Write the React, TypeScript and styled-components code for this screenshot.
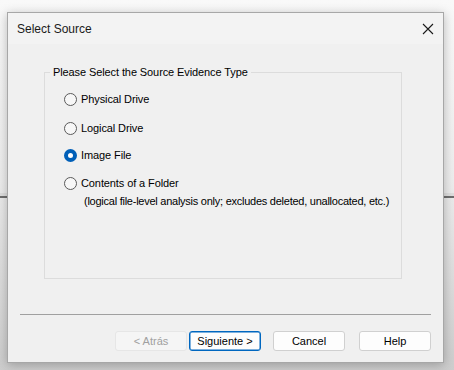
import React from "react";
import styled, { createGlobalStyle } from "styled-components";

const GlobalStyle = createGlobalStyle`
    html, body {
        margin: 0;
        padding: 0;
    }
    body {
        width: 454px;
        height: 370px;
        overflow: hidden;
        font-family: "Liberation Sans", Arial, sans-serif;
        background:
            linear-gradient(
                to bottom,
                transparent 0,
                transparent 193px,
                #dedede 193px,
                #dedede 196px,
                #6e6e6e 196px,
                #6e6e6e 198px,
                transparent 198px
            ),
            linear-gradient(to bottom, #f9f9f9 0, #ededed 180px, #cdcdcd 370px);
    }
`;

const Dialog = styled.div`
    margin: 12px 0 0 7px;
    width: 435px;
    height: 349px;
    border: 1px solid #a7a7a7;
    background: #f0f0f0;
    box-shadow: 0 2px 10px rgba(0, 0, 0, 0.25);
    display: flex;
    flex-direction: column;
`;

const TitleBar = styled.div`
    height: 31px;
    display: flex;
    align-items: center;
    justify-content: space-between;
    padding: 0 6px 0 9px;
    background: #f3f3f3;
    font-size: 12px;
    color: #1a1a1a;
`;

const CloseButton = styled.div`
    width: 18px;
    height: 18px;
    display: flex;
    align-items: center;
    justify-content: center;
`;

const Content = styled.div`
    flex: 1;
    display: flex;
    flex-direction: column;
    padding: 22px 12px 11px 12px;
`;

const Group = styled.fieldset`
    margin: 0 0 0 24px;
    width: 356px;
    height: 211px;
    padding: 0;
    border: 1px solid #dcdcdc;
    border-radius: 0;
    box-sizing: content-box;
    display: flex;
    flex-direction: column;
    legend {
        margin-left: 5px;
        padding: 0 3px;
        font-size: 11px;
        letter-spacing: -0.1px;
        color: #000;
    }
`;

const Options = styled.div`
    display: flex;
    flex-direction: column;
    padding: 15px 0 0 19px;
`;

const Option = styled.label<{ $gap: number }>`
    display: flex;
    align-items: center;
    gap: 4px;
    margin-bottom: ${(p) => p.$gap}px;
    font-size: 11px;
    letter-spacing: -0.1px;
    color: #000;
    line-height: 13px;
`;

const Radio = styled.span<{ $checked?: boolean }>`
    width: 13px;
    height: 13px;
    box-sizing: border-box;
    border-radius: 50%;
    flex-shrink: 0;
    border: ${(p) => (p.$checked ? "4px solid #005fb8" : "1px solid #5a5a5a")};
    background: ${(p) => (p.$checked ? "#ffffff" : "#f7f7f7")};
`;

const Note = styled.div`
    margin: 5px 0 0 20px;
    font-size: 11px;
    line-height: 13px;
    letter-spacing: -0.25px;
    white-space: nowrap;
    color: #000;
`;

const Separator = styled.div`
    margin-top: auto;
    height: 1px;
    background: #a0a0a0;
`;

const ButtonRow = styled.div`
    display: flex;
    justify-content: flex-end;
    margin-top: 16px;
`;

const Button = styled.button<{ $primary?: boolean; $space?: number }>`
    width: 72px;
    height: 20px;
    margin-left: ${(p) => p.$space ?? 0}px;
    padding: 0;
    box-sizing: border-box;
    border-radius: 3px;
    font-family: "Liberation Sans", Arial, sans-serif;
    font-size: 11px;
    color: #000;
    background: #fdfdfd;
    border: 1px solid ${(p) => (p.$primary ? "#0067c0" : "#d0d0d0")};
    box-shadow: ${(p) => (p.$primary ? "inset 0 0 0 0.5px #0067c0" : "none")};
    &:disabled {
        color: #a0a0a0;
        background: #f5f5f5;
        border-color: #e6e6e6;
    }
`;

const options = [
    { label: "Physical Drive", gap: 16 },
    { label: "Logical Drive", gap: 14 },
    { label: "Image File", gap: 15, checked: true },
    { label: "Contents of a Folder", gap: 0 },
];

const App = () => {
    return (
        <>
            <GlobalStyle />
            <Dialog>
                <TitleBar>
                    <span>Select Source</span>
                    <CloseButton>
                        <svg width="12" height="12" viewBox="0 0 12 12">
                            <path d="M1 1 L11 11 M11 1 L1 11" stroke="#1a1a1a" strokeWidth="1.1" />
                        </svg>
                    </CloseButton>
                </TitleBar>
                <Content>
                    <Group>
                        <legend>Please Select the Source Evidence Type</legend>
                        <Options>
                            {options.map((o) => (
                                <Option key={o.label} $gap={o.gap}>
                                    <Radio $checked={o.checked} />
                                    {o.label}
                                </Option>
                            ))}
                            <Note>(logical file-level analysis only; excludes deleted, unallocated, etc.)</Note>
                        </Options>
                    </Group>
                    <Separator />
                    <ButtonRow>
                        <Button disabled>&lt; Atrás</Button>
                        <Button $primary $space={2}>Siguiente &gt;</Button>
                        <Button $space={12}>Cancel</Button>
                        <Button $space={14}>Help</Button>
                    </ButtonRow>
                </Content>
            </Dialog>
        </>
    );
};

export default App;
